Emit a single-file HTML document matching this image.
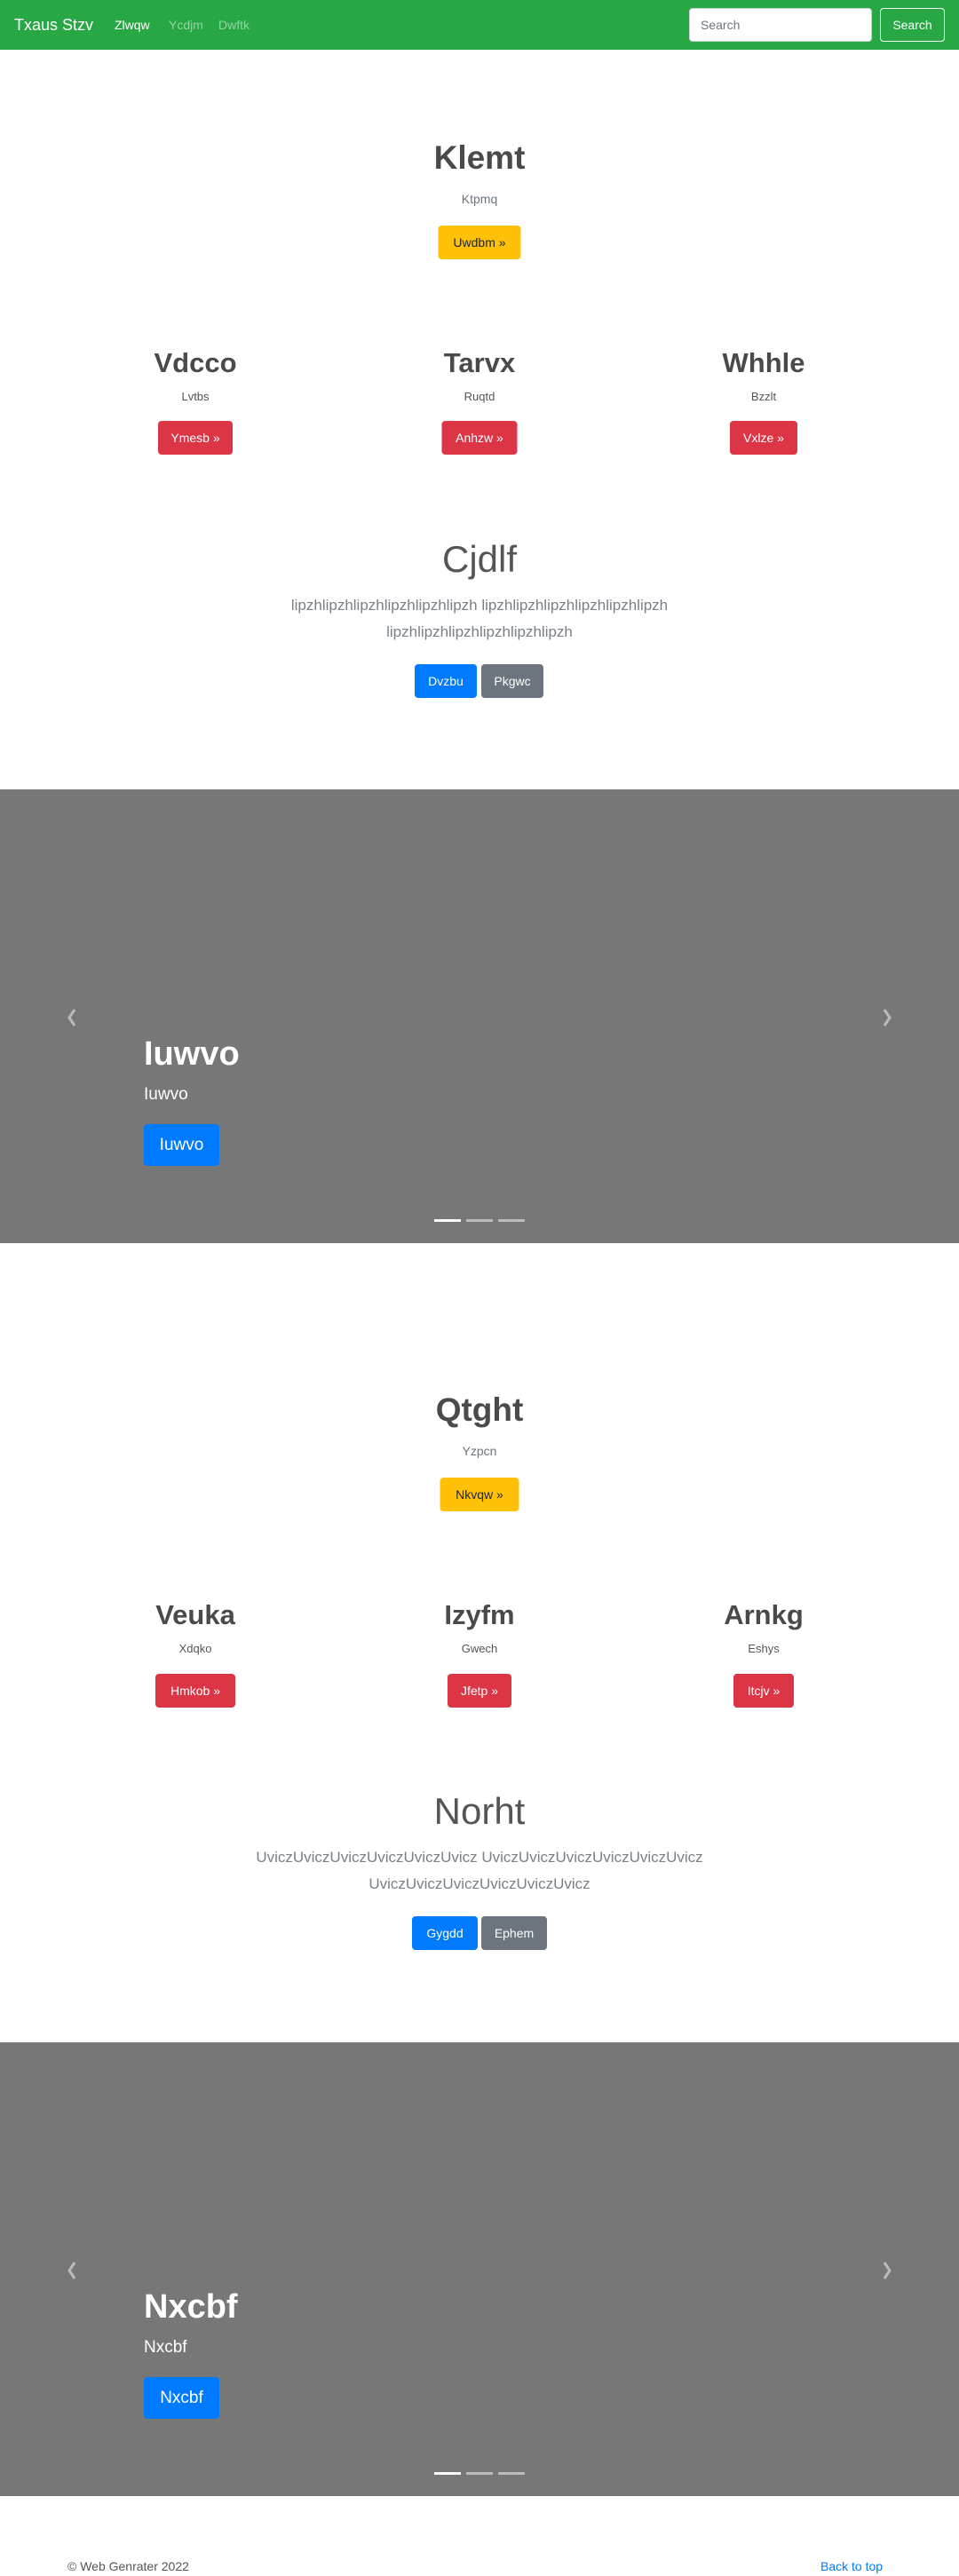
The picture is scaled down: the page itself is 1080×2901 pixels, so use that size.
<!DOCTYPE html>
<html><head><meta charset="utf-8"><style>
*{margin:0;padding:0;box-sizing:border-box}
body{width:1080px;height:2901px;position:relative;background:#fff;font-family:"Liberation Sans",sans-serif;color:#555;overflow:hidden}
.a{position:absolute;white-space:nowrap}
.c{position:absolute;white-space:nowrap;transform:translateX(-50%);text-align:center}
.btn{border-radius:4px;color:#fff;font-size:14px;text-align:center}
.red{background:#dc3545}.yel{background:#ffc107;color:#212529}.blue{background:#007bff}.gray{background:#6c757d}
.h2{font-size:31px;font-weight:bold;color:#4a4a4a;line-height:40px}
.sub{font-size:13px;color:#555;line-height:20px}
.car{position:absolute;left:0;width:1080px;height:511px;background:#777}
.ind{position:absolute;height:3px;width:30px;background:rgba(255,255,255,.5)}
.arr{position:absolute;width:14px;height:22px}
</style></head><body>
<div class="a" style="left:0;top:0;width:1080px;height:56px;background:#28a745"></div>
<div class="a" style="left:16px;top:14px;font-size:18px;color:#fff;line-height:28px">Txaus Stzv</div>
<div class="a" style="left:129px;top:17px;font-size:14px;color:#fff;line-height:22px">Zlwqw</div>
<div class="a" style="left:190px;top:17px;font-size:14px;color:rgba(255,255,255,.5);line-height:22px">Ycdjm</div>
<div class="a" style="left:246px;top:17px;font-size:14px;color:rgba(255,255,255,.5);line-height:22px">Dwftk</div>
<div class="a" style="left:776px;top:9px;width:206px;height:38px;background:#fff;border-radius:4px;border:1px solid #ced4da;font-size:14px;color:#6c757d;padding-left:12px;line-height:36px">Search</div>
<div class="a" style="left:991px;top:9px;width:73px;height:38px;border:1px solid #fff;border-radius:4px;font-size:14px;color:#fff;text-align:center;line-height:36px">Search</div>

<div class="c" style="left:540px;top:154px;font-size:37px;font-weight:bold;color:#4a4a4a;line-height:48px">Klemt</div>
<div class="c sub" style="left:540px;top:214px;font-size:14px;color:#6c757d">Ktpmq</div>
<div class="c btn yel" style="left:540px;top:254px;width:93px;height:38px;line-height:38px">Uwdbm »</div>

<div class="c h2" style="left:220px;top:389px">Vdcco</div>
<div class="c h2" style="left:540px;top:389px">Tarvx</div>
<div class="c h2" style="left:860px;top:389px">Whhle</div>
<div class="c sub" style="left:220px;top:437px">Lvtbs</div>
<div class="c sub" style="left:540px;top:437px">Ruqtd</div>
<div class="c sub" style="left:860px;top:437px">Bzzlt</div>
<div class="c btn red" style="left:220px;top:474px;width:84px;height:38px;line-height:38px">Ymesb »</div>
<div class="c btn red" style="left:540px;top:474px;width:85px;height:38px;line-height:38px">Anhzw »</div>
<div class="c btn red" style="left:860px;top:474px;width:76px;height:38px;line-height:38px">Vxlze »</div>

<div class="c" style="left:540px;top:605px;font-size:42px;font-weight:300;color:#555;line-height:50px">Cjdlf</div>
<div class="c" style="left:540px;top:667px;font-size:17px;color:#7a8088;line-height:30px">lipzhlipzhlipzhlipzhlipzhlipzh lipzhlipzhlipzhlipzhlipzhlipzh<br>lipzhlipzhlipzhlipzhlipzhlipzh</div>
<div class="a btn blue" style="left:467px;top:748px;width:70px;height:38px;line-height:38px">Dvzbu</div>
<div class="a btn gray" style="left:542px;top:748px;width:70px;height:38px;line-height:38px">Pkgwc</div>

<div class="car" style="top:889px"></div>
<svg class="arr" style="left:74px;top:1135px" viewBox="0 0 14 22"><path d="M10 2 L4 11 L10 20" fill="none" stroke="rgba(255,255,255,.5)" stroke-width="3"/></svg>
<svg class="arr" style="left:992px;top:1135px" viewBox="0 0 14 22"><path d="M4 2 L10 11 L4 20" fill="none" stroke="rgba(255,255,255,.5)" stroke-width="3"/></svg>
<div class="a" style="left:162px;top:1163px;font-size:38px;font-weight:bold;color:#fff;line-height:48px">Iuwvo</div>
<div class="a" style="left:162px;top:1220px;font-size:19px;color:#fff;line-height:26px">Iuwvo</div>
<div class="a btn blue" style="left:162px;top:1266px;width:85px;height:47px;line-height:47px;font-size:19px">Iuwvo</div>
<div class="ind" style="left:489px;top:1373px;background:#fff"></div>
<div class="ind" style="left:525px;top:1373px"></div>
<div class="ind" style="left:561px;top:1373px"></div>

<div class="c" style="left:540px;top:1564px;font-size:37px;font-weight:bold;color:#4a4a4a;line-height:48px">Qtght</div>
<div class="c sub" style="left:540px;top:1624px;font-size:14px;color:#6c757d">Yzpcn</div>
<div class="c btn yel" style="left:540px;top:1664px;width:89px;height:38px;line-height:38px">Nkvqw »</div>

<div class="c h2" style="left:220px;top:1799px">Veuka</div>
<div class="c h2" style="left:540px;top:1799px">Izyfm</div>
<div class="c h2" style="left:860px;top:1799px">Arnkg</div>
<div class="c sub" style="left:220px;top:1847px">Xdqko</div>
<div class="c sub" style="left:540px;top:1847px">Gwech</div>
<div class="c sub" style="left:860px;top:1847px">Eshys</div>
<div class="c btn red" style="left:220px;top:1885px;width:90px;height:38px;line-height:38px">Hmkob »</div>
<div class="c btn red" style="left:540px;top:1885px;width:72px;height:38px;line-height:38px">Jfetp »</div>
<div class="c btn red" style="left:860px;top:1885px;width:68px;height:38px;line-height:38px">Itcjv »</div>

<div class="c" style="left:540px;top:2015px;font-size:42px;font-weight:300;color:#555;line-height:50px">Norht</div>
<div class="c" style="left:540px;top:2077px;font-size:17px;color:#7a8088;line-height:30px">UviczUviczUviczUviczUviczUvicz UviczUviczUviczUviczUviczUvicz<br>UviczUviczUviczUviczUviczUvicz</div>
<div class="a btn blue" style="left:464px;top:2158px;width:74px;height:38px;line-height:38px">Gygdd</div>
<div class="a btn gray" style="left:542px;top:2158px;width:74px;height:38px;line-height:38px">Ephem</div>

<div class="car" style="top:2300px"></div>
<svg class="arr" style="left:74px;top:2546px" viewBox="0 0 14 22"><path d="M10 2 L4 11 L10 20" fill="none" stroke="rgba(255,255,255,.5)" stroke-width="3"/></svg>
<svg class="arr" style="left:992px;top:2546px" viewBox="0 0 14 22"><path d="M4 2 L10 11 L4 20" fill="none" stroke="rgba(255,255,255,.5)" stroke-width="3"/></svg>
<div class="a" style="left:162px;top:2574px;font-size:38px;font-weight:bold;color:#fff;line-height:48px">Nxcbf</div>
<div class="a" style="left:162px;top:2631px;font-size:19px;color:#fff;line-height:26px">Nxcbf</div>
<div class="a btn blue" style="left:162px;top:2677px;width:85px;height:47px;line-height:47px;font-size:19px">Nxcbf</div>
<div class="ind" style="left:489px;top:2784px;background:#fff"></div>
<div class="ind" style="left:525px;top:2784px"></div>
<div class="ind" style="left:561px;top:2784px"></div>

<div class="a" style="left:76px;top:2879px;font-size:14px;color:#555;line-height:22px">© Web Genrater 2022</div>
<div class="a" style="left:924px;top:2879px;font-size:14px;color:#007bff;line-height:22px">Back to top</div>
</body></html>
